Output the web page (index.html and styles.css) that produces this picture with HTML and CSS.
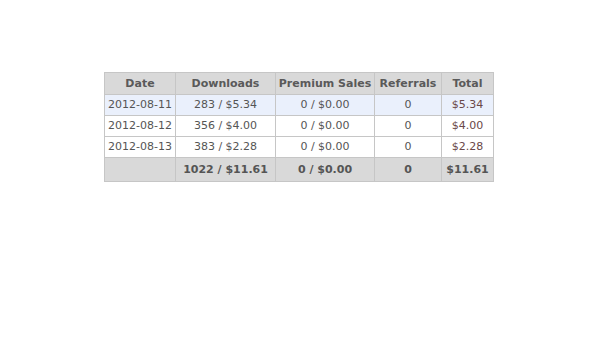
FILE: index.html
```html
<!DOCTYPE html>
<html>
<head>
<meta charset="utf-8">
<link rel="stylesheet" href="styles.css">
</head>
<body>
<div class="wrap">
<table class="stats">
<colgroup>
<col class="c-date"><col class="c-dl"><col class="c-prem"><col class="c-ref"><col class="c-tot">
</colgroup>
<thead>
<tr><th>Date</th><th>Downloads</th><th>Premium Sales</th><th>Referrals</th><th>Total</th></tr>
</thead>
<tbody>
<tr class="hl"><td>2012-08-11</td><td>283 / $5.34</td><td>0 / $0.00</td><td>0</td><td class="tot">$5.34</td></tr>
<tr><td>2012-08-12</td><td>356 / $4.00</td><td>0 / $0.00</td><td>0</td><td class="tot">$4.00</td></tr>
<tr><td>2012-08-13</td><td>383 / $2.28</td><td>0 / $0.00</td><td>0</td><td class="tot">$2.28</td></tr>
</tbody>
<tfoot>
<tr><td></td><td>1022 / $11.61</td><td>0 / $0.00</td><td>0</td><td>$11.61</td></tr>
</tfoot>
</table>
</div>
</body>
</html>
```
FILE: styles.css
```css
body {
  margin: 0;
  background: #fff;
  font-family: "DejaVu Sans", Verdana, sans-serif;
  font-size: 11px;
}
.wrap {
  padding: 72px 0 0 104px;
}
.stats {
  border-collapse: collapse;
  table-layout: fixed;
  width: 389px;
}
.c-date { width: 71px; }
.c-dl { width: 100px; }
.c-prem { width: 99px; }
.c-ref { width: 67px; }
.c-tot { width: 52px; }
.stats th, .stats td {
  border: 1px solid #c6c6c6;
  padding: 0 2px;
  height: 20px;
  line-height: 14px;
  text-align: center;
  color: #555;
  white-space: nowrap;
  overflow: hidden;
}
.stats th {
  height: 21px;
  background: #d9d9d9;
  font-weight: bold;
  color: #5a5a5a;
}
.stats tbody tr.hl td {
  background: #eaf0fc;
}
.stats td.tot {
  color: #6a4848;
}
.stats tfoot td {
  background: #d9d9d9;
  font-weight: bold;
  color: #555;
  height: 23px;
}
```
